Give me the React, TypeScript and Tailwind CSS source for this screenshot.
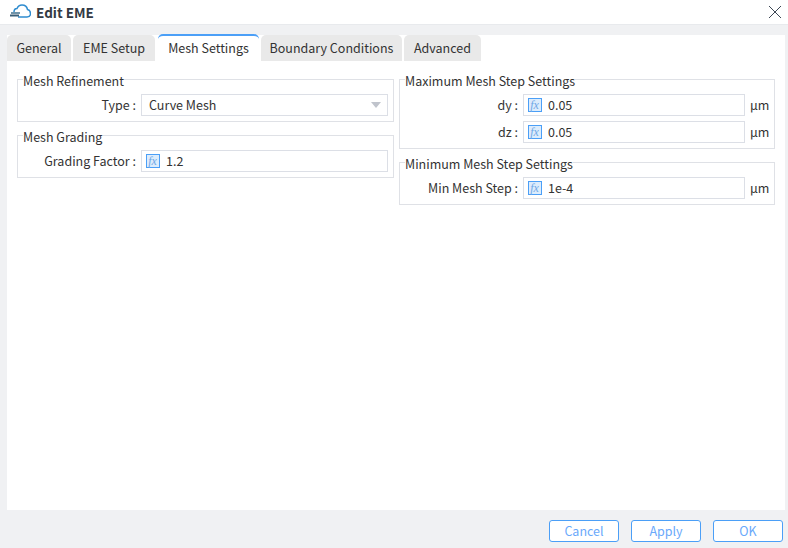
const font = '[font-family:"Noto_Sans_CJK_SC","Noto_Sans",sans-serif]';

function Fx() {
  return (
    <span className="flex h-[14px] w-[14px] shrink-0 items-center justify-center border border-[#4b9ff7] bg-[#dcecfc] pr-px text-[12px] leading-none text-[#6fa8e6] italic [font-family:'Liberation_Serif',serif]">
      fx
    </span>
  );
}

function Field({ label, value, unit }: { label: string; value: string; unit?: boolean }) {
  return (
    <div className="flex h-[22px] items-center">
      <div className="w-[118px] shrink-0 text-right whitespace-nowrap">{label} :</div>
      <div className="ml-[5px] flex h-[22px] min-w-0 flex-1 items-center border border-[#dcdfe6] pl-[4px]">
        <Fx />
        <span className="ml-[6px]">{value}</span>
      </div>
      {unit && <div className="ml-[5px] w-[19px] shrink-0">µm</div>}
    </div>
  );
}

function Group({ title, children }: { title: string; children: React.ReactNode }) {
  return (
    <fieldset className="border border-[#dfe1e6] pr-[5px] pb-[5px]">
      <legend className="ml-[5px] pt-[4px] leading-[16px]">{title}</legend>
      <div className="mt-[5px] flex flex-col gap-[5px]">{children}</div>
    </fieldset>
  );
}

const tabs = [
  { name: "General", w: "w-[64px]" },
  { name: "EME Setup", w: "w-[82px]" },
  { name: "Mesh Settings", w: "w-[101px]", active: true },
  { name: "Boundary Conditions", w: "w-[141px]" },
  { name: "Advanced", w: "w-[77px]" },
];

export default function App() {
  return (
    <div className={`flex h-[548px] w-[788px] flex-col overflow-hidden bg-[#f0f1f3] text-[12.5px] text-[#333333] ${font}`}>
      <header className="flex h-[25px] shrink-0 items-center border-b border-[#e8eaed] bg-white">
        <svg width="22" height="16" viewBox="0 0 22 16" className="ml-[9px]" fill="none">
          <path
            d="M5 8 C5 5.5 6.5 4.5 8 4.5 C9 2 11 1 13 1 C16 1 18 3 18.5 5.5 C20.5 6 21.5 8 21.5 9.5 C21.5 11.5 20 13 18 13 H9"
            stroke="#2f8ccf"
            strokeWidth="1.5"
          />
          <path d="M2 9 H11" stroke="#3f6f8c" strokeWidth="1.5" />
          <path d="M1 11.5 H10" stroke="#3a5f78" strokeWidth="2" />
        </svg>
        <span className="ml-[5px] text-[13.5px] font-bold text-[#333a44]">Edit EME</span>
        <svg width="14" height="14" viewBox="0 0 14 14" className="mr-[6px] ml-auto" fill="none">
          <path d="M1 1 L13 13 M13 1 L1 13" stroke="#3c4654" strokeWidth="1" />
        </svg>
      </header>

      <main className="mt-[10px] mr-[3px] ml-[7px] flex min-h-0 flex-1 flex-col bg-white">
        <nav className="flex h-[26px] shrink-0 gap-[2px]">
          {tabs.map((t) => (
            <div
              key={t.name}
              className={`flex items-center justify-center rounded-t-[5px] ${t.w} ${
                t.active ? "-mt-px ml-px border-t-2 border-[#4b9ff7] bg-white pb-[1px]" : "bg-[#e9e9e9]"
              }`}
            >
              {t.name}
            </div>
          ))}
        </nav>
        <div className="grid grid-cols-[377px_376px] gap-x-[5px] px-[10px] pt-[8px]">
          <div className="flex flex-col gap-[3px]">
            <Group title="Mesh Refinement">
              <div className="flex h-[22px] items-center">
                <div className="w-[118px] shrink-0 text-right">Type :</div>
                <div className="ml-[5px] flex h-[22px] flex-1 items-center justify-between border border-[#dcdfe6] pr-[6px] pl-[7px]">
                  <span>Curve Mesh</span>
                  <span className="h-0 w-0 border-x-[5px] border-t-[6px] border-x-transparent border-t-[#c0c4cc]" />
                </div>
              </div>
            </Group>
            <Group title="Mesh Grading">
              <Field label="Grading Factor" value="1.2" />
            </Group>
          </div>
          <div className="flex flex-col gap-[3px]">
            <Group title="Maximum Mesh Step Settings">
              <Field label="dy" value="0.05" unit />
              <Field label="dz" value="0.05" unit />
            </Group>
            <Group title="Minimum Mesh Step Settings">
              <Field label="Min Mesh Step" value="1e-4" unit />
            </Group>
          </div>
        </div>
      </main>

      <footer className="flex h-[38px] shrink-0 items-start justify-end gap-[12px] pt-[10px] pr-[5px]">
        {["Cancel", "Apply", "OK"].map((b) => (
          <div
            key={b}
            className="flex h-[22px] w-[70px] items-center justify-center rounded-[3px] border border-[#4b9ff7] bg-white text-[#6aa9fb]"
          >
            {b}
          </div>
        ))}
      </footer>
    </div>
  );
}
